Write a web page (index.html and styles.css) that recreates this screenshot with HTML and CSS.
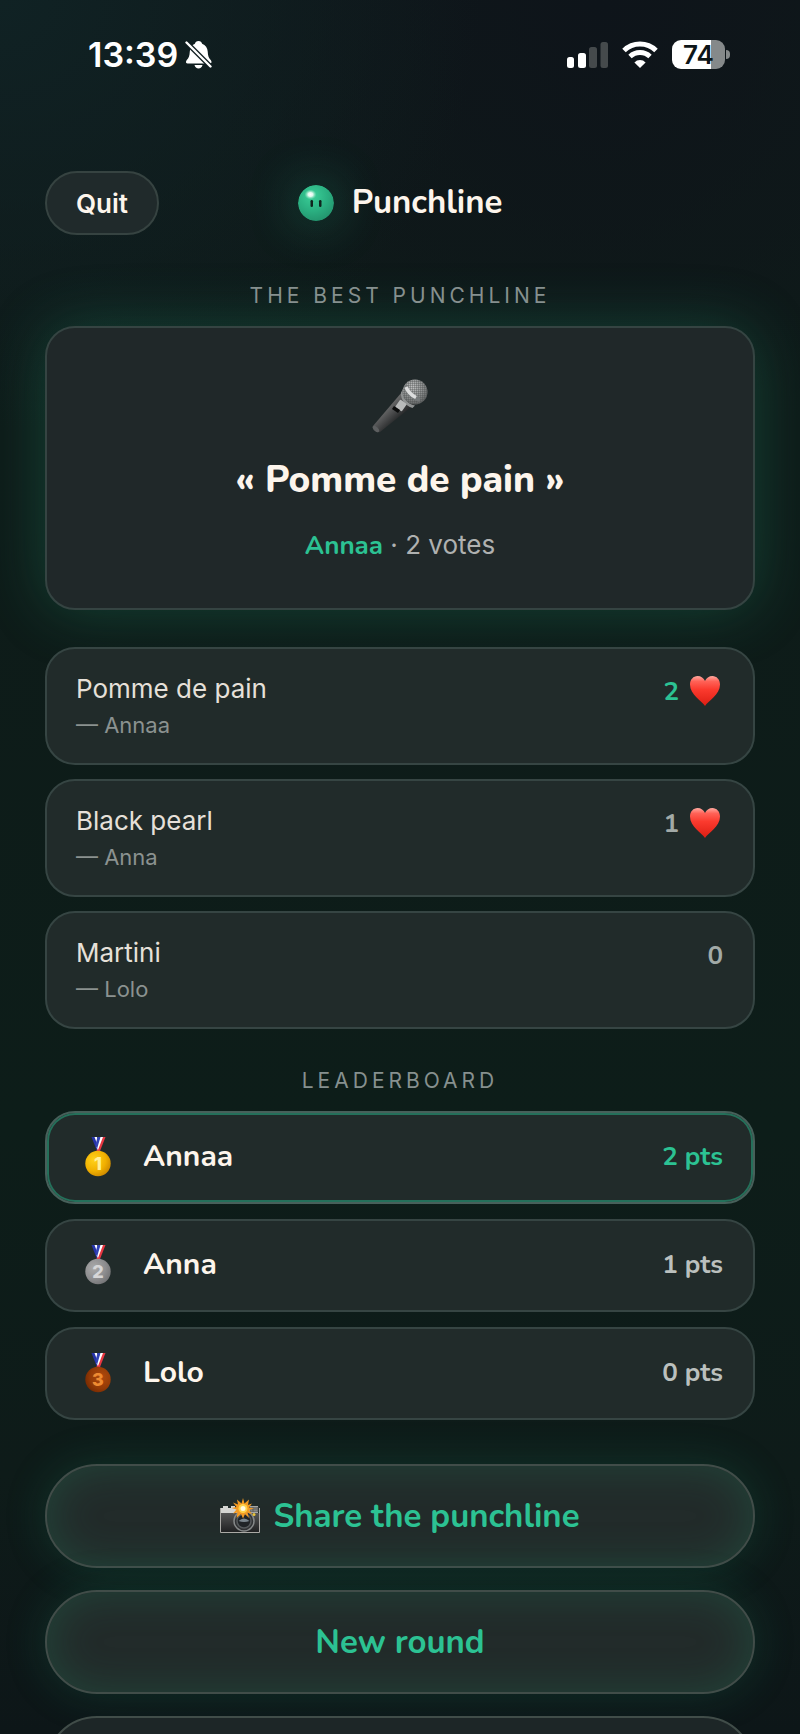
FILE: index.html
```html
<!DOCTYPE html>
<html lang="en">
<head>
<meta charset="utf-8">
<meta name="viewport" content="width=device-width, initial-scale=1">
<title>Punchline</title>
<link rel="stylesheet" href="styles.css">
</head>
<body>
<div class="app">
  <div class="status-bar">
    <div class="status-left">
      <span class="clock">13:39</span>
      <svg class="bell" viewBox="0 0 27 29" aria-hidden="true">
        <path d="M13.500 1c2 0 3.300 1.300 3.600 2.800C20.500 5 22.500 8 22.700 11.500c.2 4.500 1.100 6.500 3 8.500 1 1.200 1.400 3.500-.7 3.500H2.500c-2.100 0-1.700-2.300-.7-3.500 1.900-2 2.800-4 3-8.500C5 8 6.500 5 9.900 3.800 10.200 2.300 11.500 1 13.500 1z" fill="#fff"/>
        <path d="M9.500 25h8c-.5 2.300-2 3.500-4 3.500s-3.500-1.200-4-3.500z" fill="#fff"/>
        <path d="M1 2l25 25" stroke="#101e20" stroke-width="5"/>
        <path d="M1.500 2.500l24 24" stroke="#fff" stroke-width="2.400" stroke-linecap="round"/>
      </svg>
    </div>
    <div class="status-right">
      <svg class="signal" viewBox="0 0 41 27" aria-hidden="true">
        <rect x="0" y="16" width="7" height="11" rx="2.500" fill="#fff"/>
        <rect x="11" y="12" width="8" height="15" rx="2.500" fill="#fff"/>
        <rect x="22" y="6" width="8" height="21" rx="2.500" fill="#454a4c"/>
        <rect x="33.500" y="1" width="7.500" height="26" rx="2.500" fill="#454a4c"/>
      </svg>
      <svg class="wifi" viewBox="0 0 36 27" aria-hidden="true">
        <path d="M2 9.500a23 23 0 0 1 32 0" fill="none" stroke="#fff" stroke-width="5"/>
        <path d="M8 15.500a14.500 14.500 0 0 1 20 0" fill="none" stroke="#fff" stroke-width="4.800"/>
        <path d="M18 27l-5.600-5.600a8 8 0 0 1 11.200 0z" fill="#fff"/>
      </svg>
      <span class="battery"><span class="battery-level">74</span></span>
    </div>
  </div>

  <header class="header">
    <button class="quit" type="button">Quit</button>
    <h1 class="brand">
      <svg class="mascot" viewBox="0 0 36 36" aria-hidden="true">
        <defs>
          <radialGradient id="ball" cx=".4" cy=".3" r=".8"><stop offset="0" stop-color="#3bcf98"/><stop offset=".5" stop-color="#2bb182"/><stop offset="1" stop-color="#218e69"/></radialGradient>
          <radialGradient id="shine"><stop offset="0" stop-color="#fff"/><stop offset=".4" stop-color="#dff8ed"/><stop offset="1" stop-color="#8de5c2" stop-opacity="0"/></radialGradient>
        </defs>
        <circle cx="18" cy="18" r="18" fill="url(#ball)"/>
        <ellipse cx="12.500" cy="9.500" rx="6" ry="5" fill="url(#shine)"/>
        <rect x="12.500" y="15" width="2.500" height="7" rx="1.200" fill="#10251e"/>
        <rect x="21" y="15" width="2.500" height="7" rx="1.200" fill="#10251e"/>
      </svg>
      <span>Punchline</span>
    </h1>
  </header>

  <main>
    <section>
      <h2 class="label">The best punchline</h2>
      <div class="winner">
        <svg class="mic" viewBox="0 0 56 56" aria-hidden="true">
          <defs>
            <linearGradient id="handle" x1="0" y1="0" x2="1" y2="1"><stop offset=".3" stop-color="#777"/><stop offset=".5" stop-color="#48494a"/><stop offset=".7" stop-color="#17191a"/></linearGradient>
            <radialGradient id="grille" cx=".4" cy=".3" r=".75"><stop offset="0" stop-color="#c4c5c5"/><stop offset=".6" stop-color="#8a8d8d"/><stop offset="1" stop-color="#5a5d5d"/></radialGradient>
            <pattern id="mesh" width="2" height="2" patternUnits="userSpaceOnUse"><path d="M0 0h2M0 0v2" stroke="#4a4d4e" stroke-width=".7"/></pattern>
          </defs>
          <path d="M30 13L1 47c-1.500 3 3 7.500 7 6L43 25z" fill="url(#handle)"/>
          <ellipse cx="4" cy="50" rx="2" ry="4" transform="rotate(-45 4 50)" fill="#5d5f60"/>
          <path d="M31 10c-1 8 4 15 12 16.500l-2.500 2.500C33 26.500 28.500 21 29 13.500z" fill="#8f9292"/>
          <circle cx="43" cy="13" r="12.500" fill="url(#grille)"/>
          <circle cx="43" cy="13" r="12.500" fill="url(#mesh)"/>
          <path d="M34 6.500c1 7 6 12 14 14.500" fill="none" stroke="#75797a" stroke-width="4"/>
          <path d="M34 8c2 5 5 8 10 10.500" fill="none" stroke="#dcdddd" stroke-width="3.500"/>
          <rect x="25" y="22" width="8" height="9" rx="1" transform="rotate(35 29 26.500)" fill="#b8baba"/>
          <path d="M22 27l6 4-2 3-6-4z" fill="#0b0c0c"/>
        </svg>
        <p class="quote">« Pomme de pain »</p>
        <p class="credit"><strong>Annaa</strong> · 2 votes</p>
      </div>
    </section>

    <ul class="list answers">
      <li class="card answer">
        <div><p class="answer-text">Pomme de pain</p><p class="author">— Annaa</p></div>
        <span class="votes top">2 <svg class="heart" viewBox="0 0 32 32" role="img" aria-label="votes"><defs><linearGradient id="red" x1="0" y1="0" x2="0" y2="1"><stop offset="0" stop-color="#ffaaa0"/><stop offset=".18" stop-color="#ff6257"/><stop offset=".45" stop-color="#fb3a2e"/><stop offset="1" stop-color="#dc1e13"/></linearGradient></defs><path id="heart-shape" d="M16 31C13 26 1 20 1 9.500 1 4.500 4.500 1 8.500 1c3.500 0 6.300 2 7.500 5 1.200-3 4-5 7.500-5C27.500 1 31 4.500 31 9.500 31 20 19 26 16 31z" fill="url(#red)"/></svg></span>
      </li>
      <li class="card answer">
        <div><p class="answer-text">Black pearl</p><p class="author">— Anna</p></div>
        <span class="votes">1 <svg class="heart" viewBox="0 0 32 32" role="img" aria-label="votes"><use href="#heart-shape"/></svg></span>
      </li>
      <li class="card answer">
        <div><p class="answer-text">Martini</p><p class="author">— Lolo</p></div>
        <span class="votes">0</span>
      </li>
    </ul>

    <section class="board">
      <h2 class="label">Leaderboard</h2>
      <ol class="list">
        <li class="card player leader">
          <svg class="medal gold" viewBox="0 0 26 40" aria-hidden="true">
            <defs>
              <g id="ribbon"><path d="M6.500 0h4l5 14h-3.500z" fill="#2633a8"/><path d="M9.500 0H12l3.500 9-1 4z" fill="#fff"/><path d="M20.500 0h-4l-5 14H15z" fill="#e73742"/><path d="M18 0h-3L11.500 10.500l1.500 2.500z" fill="#fff"/><path d="M15.500 0H12.500L10.500 8l1.500 4z" fill="#3142b4"/></g>
              <radialGradient id="gold" cx=".35" cy=".35" r=".75"><stop offset="0" stop-color="#ffd21c"/><stop offset=".6" stop-color="#f1b000"/><stop offset="1" stop-color="#c88400"/></radialGradient>
              <radialGradient id="silver" cx=".35" cy=".35" r=".75"><stop offset="0" stop-color="#aaa"/><stop offset=".6" stop-color="#8d8d8f"/><stop offset="1" stop-color="#707072"/></radialGradient>
              <radialGradient id="bronze" cx=".65" cy=".4" r=".75"><stop offset="0" stop-color="#ad4a0d"/><stop offset=".6" stop-color="#943a06"/><stop offset="1" stop-color="#6f2600"/></radialGradient>
            </defs>
            <use href="#ribbon"/><circle cx="13" cy="26.500" r="12.700" fill="url(#gold)"/><text x="13" y="33" class="rank">1</text>
          </svg>
          <span class="name">Annaa</span><span class="points">2 pts</span>
        </li>
        <li class="card player">
          <svg class="medal silver" viewBox="0 0 26 40" aria-hidden="true"><use href="#ribbon"/><circle cx="13" cy="26.500" r="12.700" fill="url(#silver)"/><text x="13" y="33" class="rank">2</text></svg>
          <span class="name">Anna</span><span class="points">1 pts</span>
        </li>
        <li class="card player">
          <svg class="medal bronze" viewBox="0 0 26 40" aria-hidden="true"><use href="#ribbon"/><circle cx="13" cy="26.500" r="12.700" fill="url(#bronze)"/><text x="13" y="33" class="rank">3</text></svg>
          <span class="name">Lolo</span><span class="points">0 pts</span>
        </li>
      </ol>
    </section>

    <div class="actions">
      <button class="action" type="button">
        <svg class="camera" viewBox="0 0 40 36" aria-hidden="true">
          <defs><linearGradient id="body" x1="0" y1="0" x2="0" y2="1"><stop offset="0" stop-color="#555"/><stop offset="1" stop-color="#202122"/></linearGradient></defs>
          <path d="M3 8h5v2h3V8h4v2h15V8h8v7H1V10h2z" fill="#d5d5d2"/>
          <path d="M30 9h8v5h-8zM30 11h8M33 9v5" fill="#858580" stroke="#555" stroke-width=".7"/>
          <rect x="1" y="15" width="38" height="19" fill="url(#body)"/>
          <path d="M.5 10v24.500h39V10" fill="none" stroke="#aaa9a5"/>
          <circle cx="24" cy="23" r="10" fill="#303234" stroke="#858888" stroke-width="1.500"/>
          <circle cx="24" cy="23" r="7" fill="#202427" stroke="#55595b" stroke-width="1.500"/>
          <path d="M18.500 23q5.500-5 11 0-5.500 2-11 0z" fill="#7a858d"/>
          <circle cx="34" cy="16.500" r="1.500" fill="#e8c43b"/>
          <path d="M23 0l1.500 5.500L29 1.500l-1 5.500 4-1.500-3 4 5 1-5 1.500 3 4-4.500-1.500L29 20l-4-4-2 4.500-2-4.500-4.500 4 1-5.500-4.500 1 3.500-4-5-1.500 5-1-3.500-4.500 5 2L17 1.500l4.500 4z" fill="#f39a22"/>
          <circle cx="23" cy="10.500" r="4.500" fill="#ffd24a"/><circle cx="23" cy="10.500" r="2.500" fill="#fffbe0"/>
        </svg>
        <span>Share the punchline</span>
      </button>
      <button class="action" type="button">New round</button>
      <button class="action plain" type="button" aria-label="More"></button>
    </div>
  </main>
</div>
</body>
</html>
```
FILE: styles.css
```css
* { box-sizing: border-box; }

body {
  margin: 0;
  color: #fdf5ec;
  font-family: Inter, "Open Sans", sans-serif;
  background:
    radial-gradient(ellipse 60% 25% at 0 0, #102224 0, transparent 100%),
    radial-gradient(ellipse 50% 25% at 75% 0, #0e141a 0, transparent 100%),
    linear-gradient(#0f181a, #0e1b19 25%, #0d1d19 65%, #0e1b19 85%, #0d1618);
}

h1, h2, p, ul, ol { margin: 0; padding: 0; }

.app {
  height: 100vh;
  overflow-x: hidden;
  overflow-y: auto;
  padding: 0 45px;
  scrollbar-width: none;
}

.status-bar {
  display: flex;
  justify-content: space-between;
  align-items: center;
  height: 108px;
  padding: 0 24px 0 43px;
}

.status-left, .status-right { display: flex; align-items: center; }
.status-left { gap: 7px; }
.status-right { gap: 14px; }
.clock { font-size: 34px; font-weight: 600; color: #fff; }
.bell { width: 27px; height: 29px; }
.signal { width: 41px; height: 27px; }
.wifi { width: 36px; height: 27px; }

.battery {
  position: relative;
  width: 53px;
  height: 29px;
  margin-right: 6px;
  border-radius: 9px;
  background: linear-gradient(90deg, #fff 74%, #85898a 74%);
  color: #0d1518;
  font-size: 26px;
  font-weight: 600;
  line-height: 29px;
  text-align: center;
}

.battery::after {
  content: "";
  position: absolute;
  left: 54px;
  top: 10px;
  width: 4px;
  height: 9px;
  border-radius: 0 5px 5px 0;
  background: #85898a;
}

.header {
  display: grid;
  grid-template-columns: 1fr auto 1fr;
  align-items: center;
  padding-top: 63px;
}

.quit {
  justify-self: start;
  height: 64px;
  padding: 0 29px;
  border: 2px solid #364341;
  border-radius: 32px;
  background: #202a2b;
  color: inherit;
  font: 600 26px Inter, "Open Sans", sans-serif;
}

.brand, .quote, .credit strong, .votes, .name, .points, .action {
  font-family: Nunito, "Open Sans", sans-serif;
}

.brand {
  display: flex;
  align-items: center;
  gap: 18px;
  font-size: 33px;
  font-weight: 700;
  line-height: 44px;
}

.mascot {
  width: 36px;
  height: 36px;
  border-radius: 50%;
  box-shadow: 0 0 50px rgba(43, 190, 140, 0.45);
}

.label {
  margin-top: 48px;
  color: #86908f;
  font-size: 21px;
  font-weight: 400;
  line-height: 26px;
  letter-spacing: 4px;
  text-align: center;
  text-transform: uppercase;
}

.winner {
  display: flex;
  flex-direction: column;
  align-items: center;
  margin-top: 17px;
  height: 284px;
  padding-top: 51px;
  border: 2px solid #354442;
  border-radius: 30px;
  background: #202829;
  box-shadow: 0 0 60px rgba(32, 150, 108, 0.33);
}

.mic { width: 56px; height: 56px; }
.quote { margin-top: 20px; font-size: 37px; font-weight: 800; line-height: 50px; }
.credit { margin-top: 22px; color: #afb1b0; font-size: 26px; line-height: 36px; }
.credit strong { color: #2cc293; font-weight: 700; }

.list { display: grid; gap: 14px; list-style: none; }
.answers { margin-top: 37px; }

.card {
  display: flex;
  border: 2px solid #364543;
  border-radius: 30px;
  background: #212b2a;
}

.answer { justify-content: space-between; height: 118px; padding: 22px 30px 0 29px; }
.answer-text { color: #e6e0d9; font-size: 26px; line-height: 36px; }
.author { margin-top: 3px; color: #8b9290; font-size: 22px; line-height: 30px; }

.votes {
  display: flex;
  gap: 10px;
  align-items: center;
  height: 40px;
  color: #a2aaa7;
  font-size: 26px;
  font-weight: 700;
}

.votes.top { color: #2cc293; }
.heart { width: 32px; height: 32px; margin-right: 2px; }

.board .label { margin-top: 39px; }
.board .list { margin-top: 17px; gap: 15px; }
.player { align-items: center; height: 93px; padding: 0 30px 2px 38px; }
.medal { width: 26px; height: 40px; }
.rank { font: 800 18px Inter, sans-serif; text-anchor: middle; }
.gold .rank { fill: #fff09b; }
.silver .rank { fill: #d6d6d7; }
.bronze .rank { fill: #ee8b32; }
.name { margin-left: 32px; font-size: 30px; font-weight: 700; }
.points { margin-left: auto; color: #bbc0be; font-size: 26px; font-weight: 700; }
.leader { border-color: #47605a; box-shadow: inset 0 0 0 2px #24705a; }
.leader .points { color: #2cc293; }

.actions { display: grid; gap: 22px; margin-top: 44px; }

.action {
  display: flex;
  justify-content: center;
  align-items: center;
  gap: 13px;
  height: 104px;
  border: 2px solid #414d49;
  border-radius: 52px;
  background: #222b2a;
  box-shadow: 0 0 44px rgba(32, 150, 108, 0.2), inset 0 0 44px rgba(35, 150, 110, 0.24);
  color: #2cc293;
  font-size: 33px;
  font-weight: 700;
}

.camera { width: 40px; height: 36px; }
.plain { background: #1d2627; box-shadow: none; }
```
